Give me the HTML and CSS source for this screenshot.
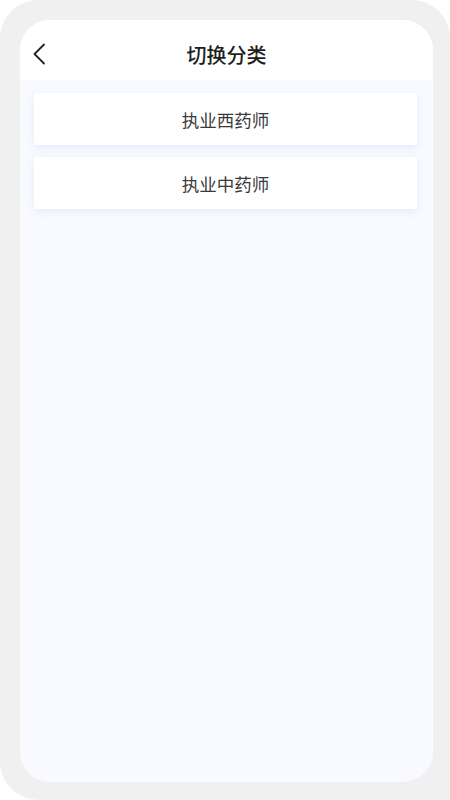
FILE: index.html
```html
<!DOCTYPE html>
<html lang="zh">
<head>
<meta charset="utf-8">
<link rel="stylesheet" href="styles.css">
</head>
<body>
<div class="frame">
  <div class="screen">
    <header class="header">
      <span class="back">
        <svg width="14" height="22" viewBox="0 0 14 22"><path d="M12 1.5 L2.5 11 L12 20.5" fill="none" stroke="#222" stroke-width="1.8" stroke-linecap="round" stroke-linejoin="round"/></svg>
      </span>
      <h1 class="title">切换分类</h1>
    </header>
    <main class="content">
      <div class="card">执业西药师</div>
      <div class="card">执业中药师</div>
    </main>
  </div>
</div>
</body>
</html>
```
FILE: styles.css
```css
html, body {
  margin: 0;
  padding: 0;
  background: #ffffff;
}
body {
  width: 450px;
  height: 800px;
  font-family: "Noto Sans CJK SC", "Noto Sans", sans-serif;
}
.frame {
  width: 450px;
  height: 800px;
  box-sizing: border-box;
  background: #f0f0f0;
  border-radius: 38px 38px 0 38px;
  padding: 20px 17px 18px 20px;
  display: flex;
}
.screen {
  flex: 1;
  background: #f8faff;
  border-radius: 30px;
  overflow: hidden;
  display: flex;
  flex-direction: column;
}
.header {
  height: 60px;
  background: #ffffff;
  position: relative;
  display: flex;
  align-items: center;
  justify-content: center;
}
.back {
  position: absolute;
  left: 12px;
  top: 23px;
  width: 14px;
  height: 22px;
  display: block;
}
.back svg { display: block; }
.title {
  margin: 0;
  font-size: 20px;
  font-weight: 500;
  color: #1e1e1e;
  margin-top: 8px;
  letter-spacing: 0;
}
.content {
  padding: 13px 16px 0 14px;
  display: flex;
  flex-direction: column;
  gap: 12px;
}
.card {
  height: 52px;
  background: #ffffff;
  box-shadow: 0 3px 8px rgba(205, 220, 245, 0.45);
  display: flex;
  align-items: center;
  justify-content: center;
  font-size: 17.5px;
  color: #3a3a3a;
}
```
